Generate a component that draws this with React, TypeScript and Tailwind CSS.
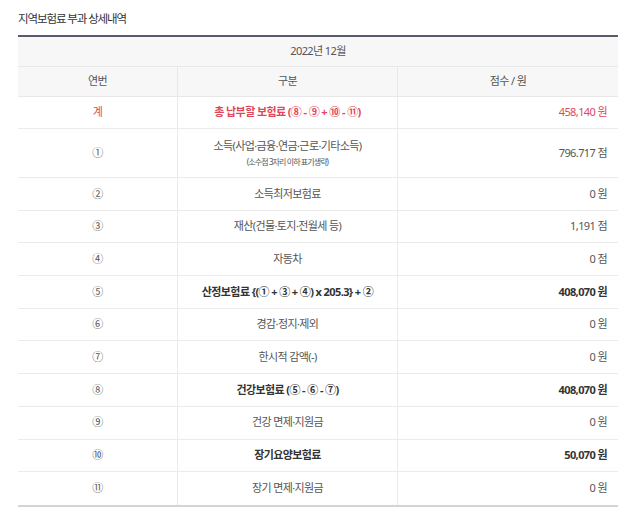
import React from "react";

type Row = {
  no: string;
  label: React.ReactNode;
  value: string;
  red?: boolean;
  bold?: boolean;
  h: string;
};

const rows: Row[] = [
  { no: "계", label: "총 납부할 보험료 (⑧ - ⑨ + ⑩ - ⑪)", value: "458,140 원", red: true, h: "h-[32px]" },
  {
    no: "①",
    label: (
      <div className="flex flex-col items-center leading-tight">
        <span>소득(사업·금융·연금·근로·기타소득)</span>
        <span className="text-[8px] mt-[4px] tracking-[-0.9px]">(소수점 3자리 이하 표기생략)</span>
      </div>
    ),
    value: "796.717 점",
    h: "h-[49px]",
  },
  { no: "②", label: "소득최저보험료", value: "0 원", h: "h-[32.7px]" },
  { no: "③", label: "재산(건물·토지·전월세 등)", value: "1,191 점", h: "h-[32.7px]" },
  { no: "④", label: "자동차", value: "0 점", h: "h-[32.7px]" },
  { no: "⑤", label: "산정보험료 {(① + ③ + ④) x 205.3} + ②", value: "408,070 원", bold: true, h: "h-[32.7px]" },
  { no: "⑥", label: "경감·정지·제외", value: "0 원", h: "h-[32.7px]" },
  { no: "⑦", label: "한시적 감액(-)", value: "0 원", h: "h-[32.7px]" },
  { no: "⑧", label: "건강보험료 (⑤ - ⑥ - ⑦)", value: "408,070 원", bold: true, h: "h-[32.7px]" },
  { no: "⑨", label: "건강 면제·지원금", value: "0 원", h: "h-[32.7px]" },
  { no: "⑩", label: "장기요양보험료", value: "50,070 원", bold: true, h: "h-[32.7px]" },
  { no: "⑪", label: "장기 면제·지원금", value: "0 원", h: "h-[32.7px]" },
];

export default function App() {
  return (
    <div
      className="w-[640px] h-[525px] bg-white text-[#555] text-[11px] tracking-[-0.6px]"
      style={{ fontFamily: '"Noto Sans", "Noto Sans CJK KR", sans-serif' }}
    >
      <div className="pl-[18px] pt-[10px] h-[35px] text-[11.5px] text-[#333] tracking-[-1.1px]">
        지역보험료 부과 상세내역
      </div>
      <div className="ml-[18px] w-[600px] border-t-2 border-[#5b5b6b] border-b-2 border-b-[#d3d3da]">
        <div className="h-[30px] bg-[#f7f7f7] border-b border-[#e8e8e8] flex items-center justify-center text-[#555]">
          2022년 12월
        </div>
        <div className="h-[30px] bg-[#f7f7f7] border-b border-[#e8e8e8] grid grid-cols-[160px_220px_1fr]">
          <div className="flex items-center justify-center border-r border-[#e8e8e8]">연번</div>
          <div className="flex items-center justify-center border-r border-[#e8e8e8]">구분</div>
          <div className="flex items-center justify-center">점수 / 원</div>
        </div>
        {rows.map((r, i) => (
          <div
            key={i}
            className={`${r.h} ${
              i < rows.length - 1 ? "border-b border-[#ebebeb]" : ""
            } grid grid-cols-[160px_220px_1fr] ${r.red ? "text-[#e0475c]" : ""}`}
          >
            <div className="flex items-center justify-center border-r border-[#ebebeb]">{r.no}</div>
            <div
              className={`flex items-center justify-center border-r border-[#ebebeb] ${
                r.bold || r.red ? "font-bold" : ""
              } ${r.bold ? "text-[#333]" : ""}`}
            >
              {r.label}
            </div>
            <div
              className={`flex items-center justify-end pr-[11px] ${r.bold ? "font-bold text-[#333]" : ""}`}
            >
              {r.value}
            </div>
          </div>
        ))}
      </div>
    </div>
  );
}
